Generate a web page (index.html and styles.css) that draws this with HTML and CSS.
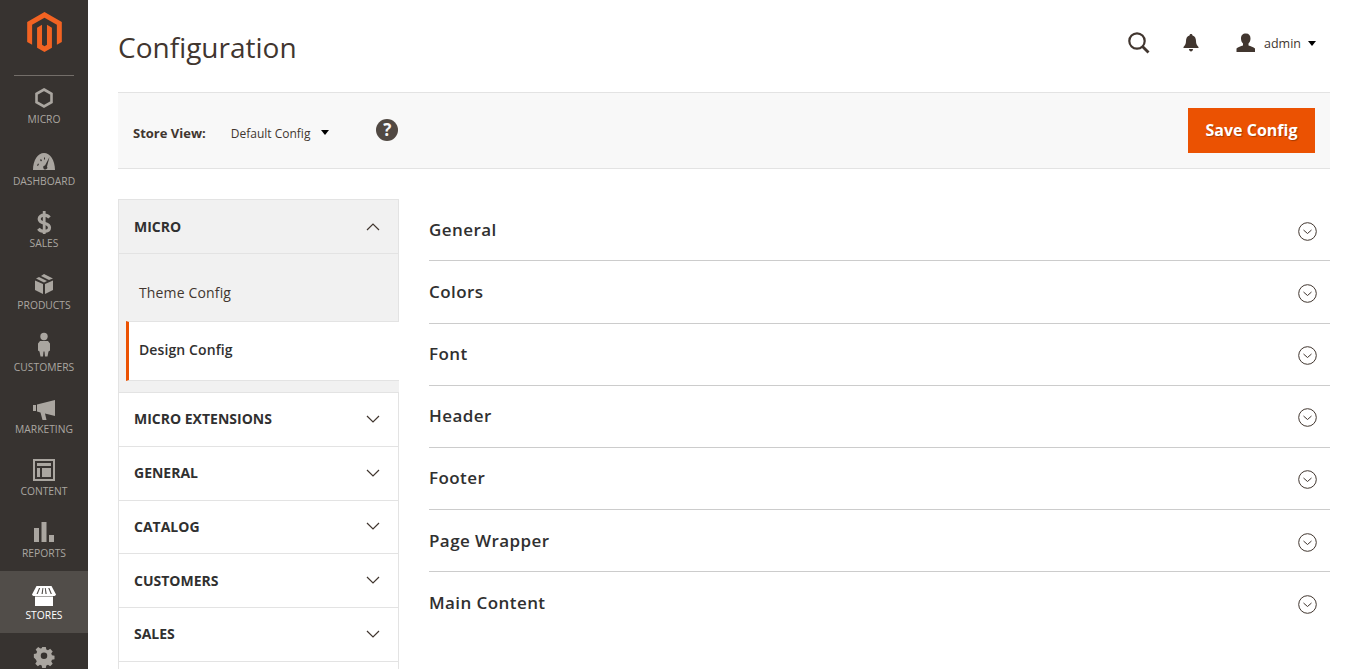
FILE: index.html
```html
<!DOCTYPE html>
<html>
	<head>
		<meta charset="utf-8" />
		<title>Configuration</title>
		<link rel="stylesheet" href="styles.css">
	</head>
	<body>
		<div class="menu">
			<div class="menu-logo">
				<svg width="35" height="40" viewBox="1.6 0 20.8 24"><path fill="#f26322" d="M12 24l-4.455-2.572v-12l2.970-1.715v12.001l1.485.902 1.485-.902V7.713l2.971 1.715v12L12 24zM22.391 6v12l-2.969 1.714V7.713L12 3.430 4.574 7.713v12.001L1.609 18V6L12 0l10.391 6z"/></svg>
			</div>
			<a class="menu-item" href="#">
				<svg class="menu-icon" viewBox="0 0 30 30"><path fill="none" stroke="currentColor" stroke-width="2.600" d="M15 6.500l7.500 4.300v8.400l-7.500 4.300-7.500-4.300v-8.400z"/></svg>
				<span>Micro</span>
			</a>
			<a class="menu-item" href="#">
				<svg class="menu-icon" viewBox="0 0 30 30"><path fill="currentColor" fill-rule="evenodd" d="M4 25c0-10 5-17 11-17s11 7 11 17zM20.500 12l-4.500 8.500a2 2 0 1 0 2 1zM8 20.500l1 .5 1-2-1-.5zM11 15l1 1.500 1-1-1-1.500zM15 12.500v2h1v-2z"/></svg>
				<span>Dashboard</span>
			</a>
			<a class="menu-item" href="#">
				<svg class="menu-icon" viewBox="0 0 30 30"><path fill="none" stroke="currentColor" stroke-width="3.200" d="M20.500 10.500c-1.200-1.500-3-2.300-5.300-2.300-3 0-5 1.500-5 3.800 0 5.500 10.300 3 10.300 8.500 0 2.400-2.200 3.800-5.300 3.800-2.400 0-4.500-.9-5.800-2.600"/><path fill="currentColor" d="M13.800 4h2.800v23h-2.800z"/></svg>
				<span>Sales</span>
			</a>
			<a class="menu-item" href="#">
				<svg class="menu-icon" viewBox="0 0 30 30"><path fill="currentColor" d="M14 15v10l-8-4V11.500zM16 15v10l8-4V11.500zM15 13.500L7 9.500 10 8l8 4zM20 11L12 7l3-2 9 4.500z"/></svg>
				<span>Products</span>
			</a>
			<a class="menu-item" href="#">
				<svg class="menu-icon" viewBox="0 0 30 30"><circle cx="15" cy="5.500" r="3.700" fill="currentColor"/><path fill="currentColor" d="M11 10h8l2 2.500v7l-1.500 1-1 5h-2.500l-.5-5h-1l-.5 5h-2.500l-1-5-1.500-1v-7z"/></svg>
				<span>Customers</span>
			</a>
			<a class="menu-item" href="#">
				<svg class="menu-icon" viewBox="0 0 30 30"><path fill="currentColor" transform="translate(0 2)" d="M4 10h3v6H4zM8 9.500l18-4.500v16L16 18.500l1.500 6.500h-4l-2-7.500-3.500-1z"/></svg>
				<span>Marketing</span>
			</a>
			<a class="menu-item" href="#">
				<svg class="menu-icon" viewBox="0 0 30 30"><path fill="currentColor" fill-rule="evenodd" d="M4 4h22v22H4zM6 6v18h18V6z"/><path fill="currentColor" d="M8 8h14v3H8zM8 13h3v9H8zM13 13h9v9h-9z"/></svg>
				<span>Content</span>
			</a>
			<a class="menu-item" href="#">
				<svg class="menu-icon" viewBox="0 0 30 30"><path fill="currentColor" d="M5 11h5v14H5zM12.500 5h5v20h-5zM20 18h5v7h-5z"/></svg>
				<span>Reports</span>
			</a>
			<a class="menu-item menu-item-active" href="#">
				<svg class="menu-icon" viewBox="0 0 30 30"><path fill="currentColor" fill-rule="evenodd" d="M7.500 7h15l4.500 8.500c0 .8-1 1.500-2.500 1.500h-19c-1.500 0-2.500-.7-2.500-1.500zM10 9l-2.500 6h1.200l2.500-6zM13.500 9l-1 6h1.200l.7-6zM15.800 9l.7 6h1.200l-1-6zM19.200 9l2.500 6h1.200l-2.500-6z"/><path fill="currentColor" d="M6 17.500h18V27H6z"/></svg>
				<span>Stores</span>
			</a>
			<a class="menu-item" href="#">
				<svg class="menu-icon" viewBox="0 0 30 30"><path fill="currentColor" fill-rule="evenodd" transform="translate(3.750 4) scale(.75)" d="M12.500 3h5l.7 3.500 2.300 1 3-2 3.500 3.500-2 3 1 2.300 3.500.7v5l-3.500.7-1 2.300 2 3-3.500 3.500-3-2-2.300 1-.7 3.500h-5l-.7-3.500-2.300-1-3 2-3.500-3.500 2-3-1-2.300L1 17.500v-5l3.500-.7 1-2.300-2-3L7 3l3 2 1.800-.5zM15 10.500a4.500 4.500 0 1 0 0 9 4.500 4.500 0 0 0 0-9z"/></svg>
			</a>
		</div>

		<div class="page">
			<div class="page-header">
				<h1 class="page-title">Configuration</h1>
				<div class="page-actions">
					<svg class="action-search" width="24" height="24" viewBox="0 0 24 24"><circle cx="10" cy="10" r="7.700" fill="none" stroke="#41362f" stroke-width="2.200"/><path stroke="#41362f" stroke-width="2.800" d="M15.500 15.500l6 6"/></svg>
					<svg class="action-bell" width="16" height="18" viewBox="0 0 16 18"><path fill="#41362f" d="M8 0c1 0 1.500.7 1.500 1.400C12 2.200 13 4.200 13 7c0 3 1 4.500 2.500 6v1H.5v-1C2 11.500 3 10 3 7c0-2.800 1-4.800 3.500-5.600C6.500.7 7 0 8 0zM6 15h4c0 1.500-1 2.500-2 2.500S6 16.500 6 15z"/></svg>
					<svg class="action-user" width="20" height="20" viewBox="0 0 20 20"><path fill="#41362f" d="M10 .5c3 0 4.500 2 4.500 5 0 2-.8 4-2 5v2c2 .8 5 1.500 6.500 3v3.500H.5V15.500c1.500-1.500 4.500-2.200 6.500-3v-2c-1.200-1-2-3-2-5 0-3 1.500-5 5-5z"/></svg>
					<span class="action-name">admin</span>
					<span class="caret"></span>
				</div>
			</div>

			<div class="toolbar">
				<span class="store-label">Store View:</span>
				<span class="store-value">Default Config</span>
				<span class="caret store-caret"></span>
				<span class="help">?</span>
				<a class="save-button" href="#">Save Config</a>
			</div>

			<div class="columns">
				<div class="tabs">
					<div class="tab tab-open">
						<span>Micro</span>
						<svg class="tab-arrow" width="14" height="8" viewBox="0 0 14 8"><path fill="none" stroke="#41362f" stroke-width="1.200" d="M1 7l6-6 6 6"/></svg>
					</div>
					<div class="subtabs">
						<a class="subtab" href="#">Theme Config</a>
						<a class="subtab subtab-active" href="#">Design Config</a>
					</div>
					<div class="tab">
						<span>Micro Extensions</span>
						<svg class="tab-arrow" width="14" height="8" viewBox="0 0 14 8"><path fill="none" stroke="#41362f" stroke-width="1.200" d="M1 1l6 6 6-6"/></svg>
					</div>
					<div class="tab">
						<span>General</span>
						<svg class="tab-arrow" width="14" height="8" viewBox="0 0 14 8"><path fill="none" stroke="#41362f" stroke-width="1.200" d="M1 1l6 6 6-6"/></svg>
					</div>
					<div class="tab">
						<span>Catalog</span>
						<svg class="tab-arrow" width="14" height="8" viewBox="0 0 14 8"><path fill="none" stroke="#41362f" stroke-width="1.200" d="M1 1l6 6 6-6"/></svg>
					</div>
					<div class="tab">
						<span>Customers</span>
						<svg class="tab-arrow" width="14" height="8" viewBox="0 0 14 8"><path fill="none" stroke="#41362f" stroke-width="1.200" d="M1 1l6 6 6-6"/></svg>
					</div>
					<div class="tab">
						<span>Sales</span>
						<svg class="tab-arrow" width="14" height="8" viewBox="0 0 14 8"><path fill="none" stroke="#41362f" stroke-width="1.200" d="M1 1l6 6 6-6"/></svg>
					</div>
					<div class="tab"></div>
				</div>

				<div class="sections">
					<div class="section"><span>General</span><svg class="section-arrow" width="19" height="19" viewBox="0 0 19 19"><circle cx="9.500" cy="9.500" r="8.800" fill="none" stroke="#41362f"/><path fill="none" stroke="#41362f" d="M5.500 8l4 3.500 4-3.500"/></svg></div>
					<div class="section"><span>Colors</span><svg class="section-arrow" width="19" height="19" viewBox="0 0 19 19"><circle cx="9.500" cy="9.500" r="8.800" fill="none" stroke="#41362f"/><path fill="none" stroke="#41362f" d="M5.500 8l4 3.500 4-3.500"/></svg></div>
					<div class="section"><span>Font</span><svg class="section-arrow" width="19" height="19" viewBox="0 0 19 19"><circle cx="9.500" cy="9.500" r="8.800" fill="none" stroke="#41362f"/><path fill="none" stroke="#41362f" d="M5.500 8l4 3.500 4-3.500"/></svg></div>
					<div class="section"><span>Header</span><svg class="section-arrow" width="19" height="19" viewBox="0 0 19 19"><circle cx="9.500" cy="9.500" r="8.800" fill="none" stroke="#41362f"/><path fill="none" stroke="#41362f" d="M5.500 8l4 3.500 4-3.500"/></svg></div>
					<div class="section"><span>Footer</span><svg class="section-arrow" width="19" height="19" viewBox="0 0 19 19"><circle cx="9.500" cy="9.500" r="8.800" fill="none" stroke="#41362f"/><path fill="none" stroke="#41362f" d="M5.500 8l4 3.500 4-3.500"/></svg></div>
					<div class="section"><span>Page Wrapper</span><svg class="section-arrow" width="19" height="19" viewBox="0 0 19 19"><circle cx="9.500" cy="9.500" r="8.800" fill="none" stroke="#41362f"/><path fill="none" stroke="#41362f" d="M5.500 8l4 3.500 4-3.500"/></svg></div>
					<div class="section section-last"><span>Main Content</span><svg class="section-arrow" width="19" height="19" viewBox="0 0 19 19"><circle cx="9.500" cy="9.500" r="8.800" fill="none" stroke="#41362f"/><path fill="none" stroke="#41362f" d="M5.500 8l4 3.500 4-3.500"/></svg></div>
				</div>
			</div>
		</div>
	</body>
</html>
```

FILE: styles.css
```css
html, body{height: 100%;overflow: hidden;}
body{margin: 0;padding: 0;display: flex;background: #fff;color: #41362f;font-family: "Open Sans", "Liberation Sans", sans-serif;font-size: 14px;}
a{text-decoration: none;color: inherit;}

/* left menu */
.menu{width: 88px;flex: none;height: 669px;overflow: hidden;background: #373330;}
.menu-logo{height: 75px;box-sizing: border-box;padding-top: 12px;text-align: center;}
.menu-logo svg{display: block;margin: 0 auto;}
.menu-item{
	height: 62px;box-sizing: border-box;
	display: flex;flex-direction: column;align-items: center;
	padding-top: 8px;
	color: #aaa6a0;font-size: 10.300px;line-height: 14px;text-transform: uppercase;
	position: relative;
}
.menu-item:nth-child(2)::before{
	content: "";position: absolute;top: 0;left: 14px;right: 14px;
	border-top: 1px solid #736e69;
}
.menu-item-active{background: #514d49;color: #fff;}
.menu-icon{width: 30px;height: 30px;display: block;margin-bottom: -1px;}
.menu-item:last-child{height: 36px;}

/* page */
.page{flex: 1;min-width: 0;height: 669px;overflow: hidden;padding: 0 30px;}
.page-header{height: 92px;display: flex;align-items: flex-start;justify-content: space-between;}
.page-title{margin: 25px 0 0;font-size: 28px;line-height: 44px;font-weight: 400;color: #41362f;}
.page-actions{display: flex;align-items: center;height: 24px;margin-top: 31px;padding-right: 14px;font-size: 12.500px;}
.action-search{margin-right: 32px;}
.action-bell{margin-right: 37px;}
.action-user{margin-right: 8px;}
.action-name{margin-right: 7px;}
.caret{width: 0;height: 0;border: 4.500px solid transparent;border-top: 5px solid #000;border-bottom: 0;}

.toolbar{
	height: 77px;box-sizing: border-box;
	display: flex;align-items: center;
	padding: 0 15px;
	background: #f8f8f8;border-top: 1px solid #e3e3e3;border-bottom: 1px solid #e3e3e3;
}
.store-label{font-size: 13px;font-weight: 700;margin: 4px 25px 0 0;}
.store-value{font-size: 12px;margin: 6px 9px 0 0;}
.store-caret{margin: 4px 0 0 2px;}
.help{
	width: 22px;height: 22px;border-radius: 50%;margin: -2px 0 0 47px;
	background: #514943;color: #f8f8f8;font-size: 17px;line-height: 22px;font-weight: 700;text-align: center;
}
.save-button{
	margin-left: auto;width: 127px;height: 45px;
	background: #eb5202;color: #fff;font-size: 16px;font-weight: 700;line-height: 45px;text-align: center;
	text-shadow: 1px 1px 1px rgba(0,0,0,0.3);
}

.columns{display: flex;margin-top: 30px;}

/* tabs */
.tabs{width: 281px;flex: none;margin-right: 30px;}
.tab{
	height: 54.750px;box-sizing: border-box;
	display: flex;align-items: center;justify-content: space-between;
	padding: 0 18px 1px 15px;margin-top: -1px;
	background: #fff;border: 1px solid #e3e3e3;
	font-size: 14px;font-weight: 700;text-transform: uppercase;color: #303030;
}
.tab:first-child{margin-top: 0;height: 55px;padding-bottom: 0;}
.tab-open{background: #f1f1f1;}
.subtabs{
	padding: 0 0 12px 7px;
	background: #f1f1f1;border-left: 1px solid #e3e3e3;
}
.subtab{display: block;box-sizing: border-box;font-size: 14px;color: #41362f;}
.subtab:first-child{height: 67px;padding: 29px 0 0 13px;line-height: 19px;letter-spacing: 0.15px;border-right: 1px solid #e3e3e3;}
.subtab-active{
	height: 60px;padding-left: 10px;line-height: 56px;letter-spacing: 0.1px;
	background: #fff;color: #303030;font-weight: 600;
	border-left: 3px solid #eb5202;border-top: 1px solid #e3e3e3;border-bottom: 1px solid #e3e3e3;
}

/* sections */
.sections{flex: 1;min-width: 0;padding-top: 0.300px;}
.section{
	height: 62.150px;box-sizing: border-box;
	display: flex;align-items: center;justify-content: space-between;
	padding: 0 13px 1px 0;
	border-bottom: 1px solid #cccccc;
	font-size: 17px;font-weight: 600;letter-spacing: 0.420px;color: #303030;
}
.section-arrow{margin-top: 4px;}
.section-last{border-bottom: 0;}
```
